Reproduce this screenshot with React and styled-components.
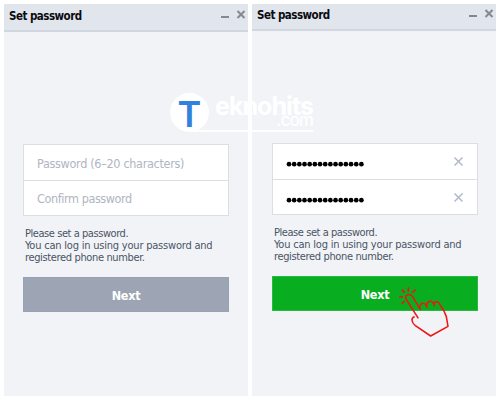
import React from "react";
import styled, { createGlobalStyle, css } from "styled-components";

const GlobalStyle = createGlobalStyle`
  * { box-sizing: border-box; }
  body { margin: 0; background: #fff; }
`;

const Page = styled.main`
  position: relative;
  display: flex;
  gap: 4px;
  width: 500px;
  height: 400px;
  padding: 4px;
  overflow: hidden;
  background: #fff;
  font-family: "DejaVu Sans Condensed", "DejaVu Sans", sans-serif;
  font-stretch: condensed;
`;

const Window = styled.section`
  flex: 1 1 0;
  min-width: 0;
  display: flex;
  flex-direction: column;
  background: #f1f3f7;
`;

const TitleBar = styled.header`
  display: flex;
  align-items: flex-start;
  justify-content: space-between;
  height: ${(p) => (p.$raised ? 27 : 28)}px;
  padding: ${(p) => (p.$raised ? "4px 2px 0 5px" : "5px 2px 0 5px")};
  background: #e1e5ec;
  border-bottom: 2px solid #d0d7e1;
`;

const Title = styled.h1`
  margin: 0;
  font-size: 11.5px;
  line-height: 14px;
  font-weight: 700;
  letter-spacing: -0.52px;
  color: #0a0b10;
  white-space: nowrap;
`;

const WindowButtons = styled.svg`
  display: block;
  width: 26px;
  height: 12px;
  fill: none;
  stroke: #858891;
  stroke-width: 2;
`;

const Form = styled.div`
  display: flex;
  flex-direction: column;
  padding: 112px 19px 0 ${(p) => (p.$shifted ? 20 : 19)}px;
  ${(p) => p.$shifted && css`padding-right: 18px;`}
`;

const Fields = styled.div`
  height: 72px;
  border: 1px solid #dcdee2;
  background: #fff;
`;

const Field = styled.div`
  display: flex;
  align-items: center;
  justify-content: space-between;
  height: 35px;
  padding: 2px 14px 0 13px;
  & + & {
    border-top: 1px solid #dcdee2;
  }
`;

const Placeholder = styled.span`
  font-size: 12.5px;
  line-height: 16px;
  color: #b0b5c2;
  letter-spacing: ${(p) => p.$spacing || 0}px;
  white-space: nowrap;
`;

const Dots = styled.svg`
  width: 80px;
  height: 6px;
  margin-top: 3px;
  fill: #000;
`;

const ClearIcon = styled.svg`
  width: 9px;
  height: 9px;
  margin-top: -2px;
  fill: none;
  stroke: #adb5c6;
  stroke-width: 1.4;
`;

const Help = styled.p`
  margin: 12px 0 0 2px;
  height: 49px;
  font-size: 11px;
  line-height: 12px;
  color: #4a5365;
  white-space: nowrap;
`;

const HelpLine = styled.span`
  display: block;
  letter-spacing: ${(p) => p.$spacing || 0}px;
`;

const NextButton = styled.button`
  height: 35px;
  padding: 2px 0 0;
  border: 1px solid ${(p) => (p.$active ? "#2bb840" : "#97a2b4")};
  background: ${(p) => (p.$active ? "#08ad20" : "#9da5b5")};
  color: #fff;
  font: 700 12.5px "DejaVu Sans Condensed", "DejaVu Sans", sans-serif;
  font-stretch: condensed;
  letter-spacing: -0.25px;
`;

const Watermark = styled.div`
  position: absolute;
  left: 170px;
  top: 93px;
  display: flex;
  width: 144px;
  height: 39px;
  color: #fff;
`;

const Badge = styled.div`
  width: 39px;
  height: 39px;
  border-radius: 50%;
  background: #fff;
  color: #3182dc;
  font: 600 36px/42px Inter, sans-serif;
  text-align: center;
`;

const Brand = styled.div`
  display: flex;
  flex-direction: column;
  align-items: flex-end;
  width: 124px;
  height: 39px;
  margin-left: -20px;
  border-bottom: 2px solid #fff;
`;

const BrandName = styled.span`
  height: 20px;
  font: 700 25px/27px Inter, sans-serif;
  letter-spacing: -0.95px;
`;

const BrandSuffix = styled.span`
  font: 500 17px/15px Inter, sans-serif;
  letter-spacing: -0.9px;
`;

const Pointer = styled.svg`
  position: absolute;
  left: 395px;
  top: 284px;
  width: 58px;
  height: 56px;
  fill: none;
  stroke: #f01414;
  stroke-width: 4.6;
  stroke-linejoin: round;
`;

function Controls() {
  return (
    <WindowButtons viewBox="0 0 26 12">
      <path d="M1 8h8" />
      <path d="m17.500 2 7 7m0-7-7 7" />
    </WindowButtons>
  );
}

function Secret() {
  return (
    <Field>
      <Dots viewBox="0 0 80 6">
        {Array.from({ length: 15 }, (_, i) => (
          <circle key={i} cx={3 + i * 5.17} cy="3.2" r="2.35" />
        ))}
      </Dots>
      <ClearIcon viewBox="0 0 9 9">
        <path d="m.5.5 8 8m0-8-8 8" />
      </ClearIcon>
    </Field>
  );
}

function PasswordWindow({ filled }) {
  return (
    <Window>
      <TitleBar $raised={filled}>
        <Title>Set password</Title>
        <Controls />
      </TitleBar>
      <Form $shifted={filled}>
        <Fields>
          {filled ? (
            <>
              <Secret />
              <Secret />
            </>
          ) : (
            <>
              <Field>
                <Placeholder $spacing={-0.31}>Password (6–20 characters)</Placeholder>
              </Field>
              <Field>
                <Placeholder $spacing={-0.4}>Confirm password</Placeholder>
              </Field>
            </>
          )}
        </Fields>
        <Help>
          <HelpLine $spacing={-0.44}>Please set a password.</HelpLine>
          <HelpLine $spacing={-0.21}>You can log in using your password and</HelpLine>
          <HelpLine $spacing={-0.36}>registered phone number.</HelpLine>
        </Help>
        <NextButton $active={filled}>Next</NextButton>
      </Form>
    </Window>
  );
}

export default function App() {
  return (
    <Page>
      <GlobalStyle />
      <PasswordWindow />
      <PasswordWindow filled />
      <Watermark>
        <Badge>T</Badge>
        <Brand>
          <BrandName>eknohits</BrandName>
          <BrandSuffix>.com</BrandSuffix>
        </Brand>
      </Watermark>
      <Pointer viewBox="75 57 174 168">
        <path d="M145 160 108 102C103 90 119 83 127 94L151 133C144 117 163 105 171 126C167 108 187 101 193 122C189 108 202 109 206 113L222 138L229 155L234 184L182 213L136 182C124 173 122 157 134 155" />
        <path d="M87 96h12M95 74l9 9M115 67v14M137 74l-10 9M95 116l9-8" />
      </Pointer>
    </Page>
  );
}
